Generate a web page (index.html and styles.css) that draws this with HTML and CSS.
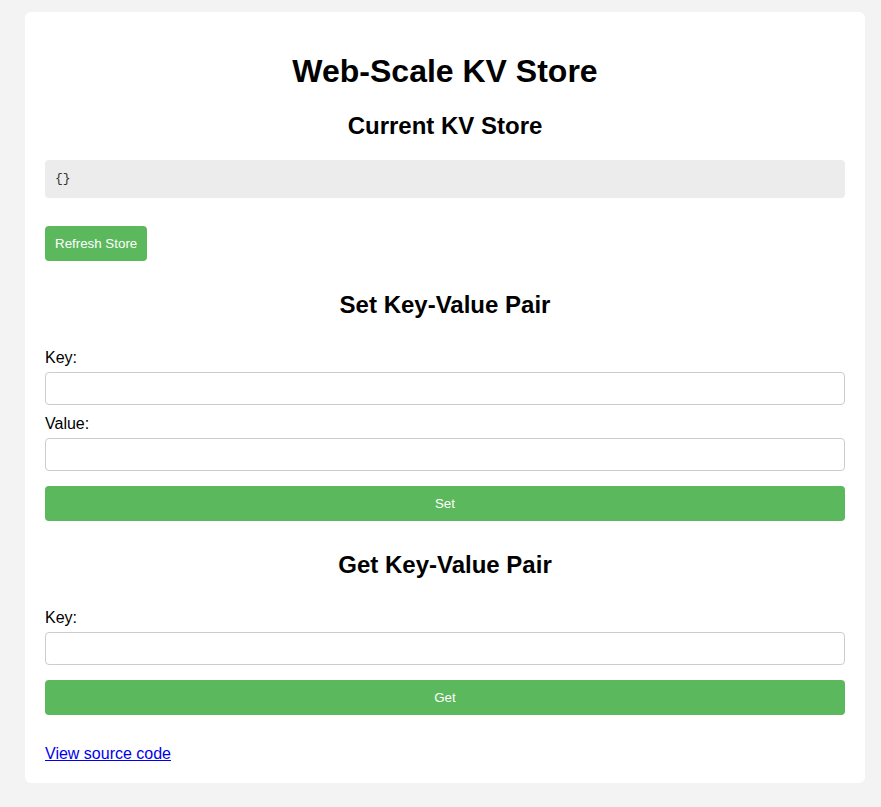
FILE: index.html
```html
<!DOCTYPE html>
<html lang="en">
<head>
<meta charset="utf-8">
<title>Web-Scale KV Store</title>
<link rel="stylesheet" href="styles.css">
</head>
<body>
<div class="container">
  <h1 class="title">Web-Scale KV Store</h1>

  <h2 class="section-title first">Current KV Store</h2>
  <pre class="store">{}</pre>
  <button class="btn refresh" type="button">Refresh Store</button>

  <h2 class="section-title">Set Key-Value Pair</h2>
  <div class="form">
    <label class="label" for="set-key">Key:</label>
    <input class="input" id="set-key" type="text">
    <label class="label" for="set-value">Value:</label>
    <input class="input" id="set-value" type="text">
    <button class="btn full" type="button">Set</button>
  </div>

  <h2 class="section-title">Get Key-Value Pair</h2>
  <div class="form">
    <label class="label" for="get-key">Key:</label>
    <input class="input" id="get-key" type="text">
    <button class="btn full" type="button">Get</button>
  </div>

  <p class="source"><a href="#">View source code</a></p>
</div>
</body>
</html>
```
FILE: styles.css
```css
html, body {
  margin: 0;
  background: #f3f3f3;
}

body {
  padding: 12px 0 25px 25px;
  font-family: "Liberation Sans", Arial, sans-serif;
  color: #000;
}

.container {
  box-sizing: border-box;
  width: 840px;
  padding: 20px;
  background: #fff;
  border-radius: 6px;
}

.title {
  margin: 21px 0 0;
  font-size: 32px;
  line-height: 37px;
  font-weight: bold;
  text-align: center;
}

.section-title {
  margin: 30px 0 0;
  font-size: 24px;
  line-height: 28px;
  font-weight: bold;
  text-align: center;
}

.section-title.first {
  margin-top: 22px;
}

.store {
  margin: 20px 0 0;
  padding: 10px;
  background: #ececec;
  border-radius: 4px;
  font-family: "Liberation Mono", "DejaVu Sans Mono", monospace;
  font-size: 13px;
  line-height: 18px;
  color: #333;
}

.btn {
  display: block;
  margin: 0;
  padding: 10px;
  border: 0;
  border-radius: 4px;
  background: #5cb85c;
  color: #fff;
  font-family: "Liberation Sans", Arial, sans-serif;
  font-size: 13.333px;
  line-height: 15px;
  cursor: pointer;
}

.refresh {
  margin-top: 28px;
}

.full {
  width: 100%;
  margin-top: 15px;
}

.form {
  display: flex;
  flex-direction: column;
  padding-top: 30px;
}

.label {
  font-size: 16px;
  line-height: 18px;
}

.input {
  box-sizing: border-box;
  width: 100%;
  height: 33px;
  margin: 5px 0 0;
  padding: 8px;
  border: 1px solid #ccc;
  border-radius: 4px;
  font-family: "Liberation Sans", Arial, sans-serif;
  font-size: 13.333px;
}

.input + .label {
  margin-top: 10px;
}

.source {
  margin: 30px 0 0;
  font-size: 16px;
  line-height: 18px;
}

.source a {
  color: #0000ee;
  text-decoration: underline;
}
```
